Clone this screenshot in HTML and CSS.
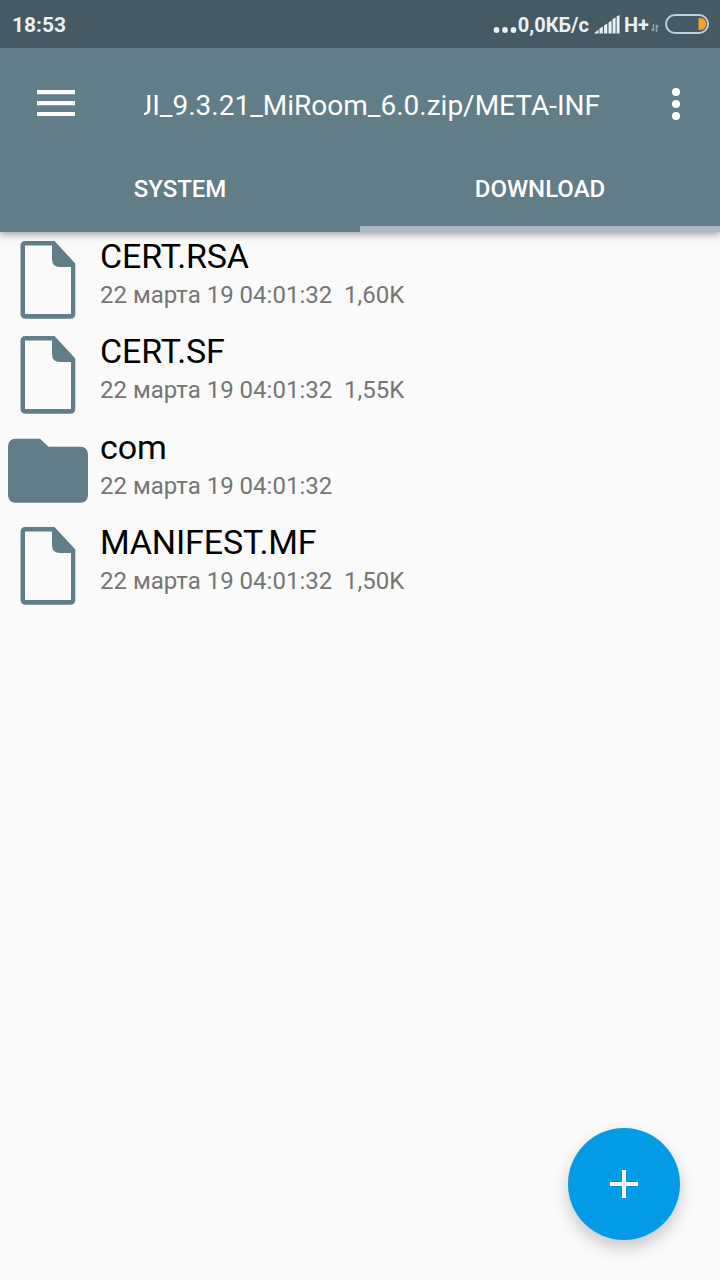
FILE: index.html
```html
<!DOCTYPE html>
<html lang="ru">
<head>
  <meta charset="UTF-8" />
  <meta name="viewport" content="width=device-width, initial-scale=1.0"/>
  <title>File Manager</title>
  <link rel="stylesheet" href="styles.css">
</head>
<body>

  <!-- Shared icons -->
  <svg class="sprite" width="0" height="0">
    <symbol id="file" viewBox="0 0 80 80">
      <path fill-rule="evenodd" d="M17.500 1H46.500L67.300 23.500V73.500Q67.300 78.800 62 78.800H18Q12.500 78.800 12.500 73.500V6Q12.500 1 17.500 1ZM17 5.500V74H63V27H52Q44 27 44 19V5.500Z"/>
    </symbol>
    <symbol id="folder" viewBox="0 0 80 80">
      <path d="M8 7.800H32L40.500 15.800H72Q80 15.800 80 23.800V63.800Q80 71.800 72 71.800H8Q0 71.800 0 63.800V15.800Q0 7.800 8 7.800Z"/>
    </symbol>
  </svg>

  <div class="status-bar">
    <span class="time">18:53</span>
    <div class="status-right">
      <svg class="dots" width="24" height="6" viewBox="0 0 24 6">
        <circle cx="3.500" cy="3" r="2.900"/><circle cx="12" cy="3" r="2.900"/><circle cx="20.500" cy="3" r="2.900"/>
      </svg>
      <span class="speed">0,0КБ/с</span>
      <svg class="signal" width="26" height="19" viewBox="0 0 26 19">
        <path d="M0 18.500L4.500 14.500V18.500ZM5.500 13.500L8.800 11.500V18.500H5.500ZM10 10.500L13.300 8.500V18.500H10ZM14.500 7.500L17.600 5.500V18.500H14.500ZM18.600 4L21.600 2.500V18.500H18.600ZM22.600 1.500L25.600 0V18.500H22.600Z"/>
      </svg>
      <span class="network">H+</span>
      <svg class="traffic" width="8" height="8" viewBox="0 0 8 8">
        <path d="M2.500 0V7M0.500 5L2.500 7M5.500 8V1M5.500 1L7.500 3"/>
      </svg>
      <svg class="battery" width="44" height="20" viewBox="0 0 44 20">
        <rect x="1" y="1" width="42" height="18" rx="9"/>
        <path d="M33.500 4H35Q41 4.500 41 10Q41 15.500 35 16H33.500Z"/>
      </svg>
    </div>
  </div>

  <header>
    <div class="toolbar">
      <svg class="menu" width="38" height="26" viewBox="0 0 38 26">
        <path d="M0 0H38V4.200H0ZM0 11H38V15.200H0ZM0 22H38V26H0Z"/>
      </svg>
      <h1 class="path"><span>JI_9.3.21_MiRoom_6.0.zip/META-INF</span></h1>
      <svg class="more" width="8" height="32" viewBox="0 0 8 32">
        <circle cx="4" cy="4" r="4"/><circle cx="4" cy="16" r="4"/><circle cx="4" cy="28" r="4"/>
      </svg>
    </div>
    <nav>
      <a>SYSTEM</a>
      <a class="active">DOWNLOAD</a>
    </nav>
  </header>

  <main>
    <div class="row">
      <svg class="icon"><use href="#file"/></svg>
      <div class="info">
        <div class="name">CERT.RSA</div>
        <div class="meta">22 марта 19 04:01:32&nbsp; 1,60K</div>
      </div>
    </div>
    <div class="row">
      <svg class="icon"><use href="#file"/></svg>
      <div class="info">
        <div class="name">CERT.SF</div>
        <div class="meta">22 марта 19 04:01:32&nbsp; 1,55K</div>
      </div>
    </div>
    <div class="row">
      <svg class="icon"><use href="#folder"/></svg>
      <div class="info">
        <div class="name">com</div>
        <div class="meta">22 марта 19 04:01:32</div>
      </div>
    </div>
    <div class="row">
      <svg class="icon"><use href="#file"/></svg>
      <div class="info">
        <div class="name">MANIFEST.MF</div>
        <div class="meta">22 марта 19 04:01:32&nbsp; 1,50K</div>
      </div>
    </div>
  </main>

  <div class="fab">
    <svg width="28" height="28" viewBox="0 0 28 28">
      <path d="M12 0H16V12H28V16H16V28H12V16H0V12H12Z"/>
    </svg>
  </div>

</body>
</html>
```
FILE: styles.css
```css
* {
  box-sizing: border-box;
}

body {
  margin: 0;
  height: 1280px;
  overflow: hidden;
  background: #fafafa;
  font-family: Roboto, "Noto Sans", sans-serif;
}

svg {
  display: block;
  flex: none;
}

.sprite {
  position: absolute;
}

.status-bar {
  position: relative;
  z-index: 1;
  display: flex;
  justify-content: space-between;
  align-items: center;
  height: 48px;
  padding: 0 11px 0 12px;
  background: #455a62;
  color: #e8f1f5;
  fill: #e8f1f5;
  font-size: 21px;
  font-weight: 700;
}

.time {
  margin-top: 2px;
}

.status-right {
  display: flex;
  align-items: center;
  font-size: 20px;
}

.dots {
  margin: 12px 1px 0 0;
}

.speed,
.network {
  margin-top: 2px;
}

.signal {
  margin: 0 4px 0 5px;
}

.traffic {
  margin: 8px 6px 0 2px;
  fill: none;
  stroke: #93a5ad;
  stroke-width: 1.5;
}

.battery rect {
  fill: none;
  stroke: #c3d0d6;
  stroke-width: 2;
}

.battery path {
  fill: #f7a12c;
}

header {
  position: relative;
  height: 184px;
  background: #607d88;
  color: #fff;
  fill: #fff;
  box-shadow: 0 2px 8px rgba(0, 0, 0, 0.4);
}

.toolbar {
  display: flex;
  align-items: center;
  height: 112px;
  padding: 0 40px 0 37px;
}

.menu {
  margin-top: -2px;
}

/* long paths are cut off on the left */
.path {
  display: flex;
  justify-content: flex-end;
  width: 456px;
  margin: 2px auto 0 69px;
  overflow: hidden;
  white-space: nowrap;
  font-size: 28px;
  font-weight: 400;
}

nav {
  display: flex;
  height: 72px;
}

nav a {
  flex: 1;
  padding-top: 15px;
  border-bottom: 6px solid transparent;
  text-align: center;
  font-size: 24px;
  font-weight: 500;
  line-height: 28px;
}

nav a.active {
  border-color: #a9bac2;
}

.row {
  display: flex;
  height: 95.33px;
  padding: 8px 8px 0;
}

.icon {
  width: 80px;
  height: 80px;
  fill: #607d88;
}

.info {
  margin-left: 12px;
  white-space: nowrap;
}

.name {
  margin-top: -4px;
  font-size: 34px;
  line-height: 40px;
  letter-spacing: -0.15px;
  color: #000;
}

.meta {
  margin-top: 5px;
  font-size: 24px;
  line-height: 28px;
  color: #757575;
}

.fab {
  position: absolute;
  right: 40px;
  bottom: 40px;
  display: flex;
  align-items: center;
  justify-content: center;
  width: 112px;
  height: 112px;
  border-radius: 50%;
  background: #039be5;
  fill: #fff;
  box-shadow: 0 8px 16px rgba(0, 0, 0, 0.2);
}
```
